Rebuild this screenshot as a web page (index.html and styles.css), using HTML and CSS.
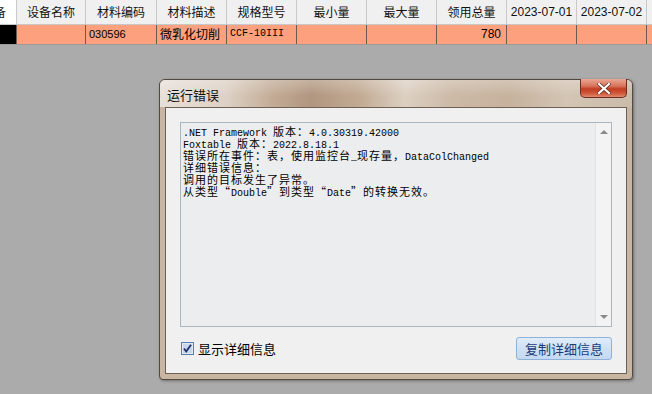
FILE: index.html
```html
<!DOCTYPE html>
<html lang="zh-CN">
<head>
    <meta charset="UTF-8">
    <title>运行错误</title>
    <link rel="stylesheet" href="styles.css">
</head>
<body>
    <div class="grid">
        <div class="hd first">备</div>
        <div class="hd">设备名称</div>
        <div class="hd">材料编码</div>
        <div class="hd">材料描述</div>
        <div class="hd">规格型号</div>
        <div class="hd">最小量</div>
        <div class="hd">最大量</div>
        <div class="hd">领用总量</div>
        <div class="hd date">2023-07-01</div>
        <div class="hd date">2023-07-02</div>
        <div class="hd"></div>

        <div class="cell black"></div>
        <div class="cell"></div>
        <div class="cell code">030596</div>
        <div class="cell">微乳化切削</div>
        <div class="cell spec">CCF-10III</div>
        <div class="cell"></div>
        <div class="cell"></div>
        <div class="cell num">780</div>
        <div class="cell"></div>
        <div class="cell"></div>
        <div class="cell"></div>
    </div>

    <div class="dialog">
        <div class="titlebar">
            <span class="title">运行错误</span>
            <button class="close">
                <svg width="14" height="11" viewBox="0 0 14 11">
                    <path d="M2 1 L12 10 M12 1 L2 10" stroke="#5a2a20" stroke-width="3.6" stroke-linecap="square"/>
                    <path d="M2 1 L12 10 M12 1 L2 10" stroke="#fff" stroke-width="2.2" stroke-linecap="square"/>
                </svg>
            </button>
        </div>
        <div class="client">
            <div class="textbox">
                <div class="text">
                    <div class="line">.NET Framework <span class="cj">版本：</span>4.0.30319.42000</div>
                    <div class="line">Foxtable <span class="cj">版本：</span>2022.8.18.1</div>
                    <div class="line"><span class="cj">错误所在事件：表，使用监控台</span>_<span class="cj">现存量，</span>DataColChanged</div>
                    <div class="line"><span class="cj">详细错误信息：</span></div>
                    <div class="line"><span class="cj">调用的目标发生了异常。</span></div>
                    <div class="line"><span class="cj">从类型“</span>Double<span class="cj">”到类型“</span>Date<span class="cj">”的转换无效。</span></div>
                </div>
                <div class="scrollbar">
                    <span class="arrow up"></span>
                    <span class="arrow down"></span>
                </div>
            </div>
            <div class="footer">
                <label class="check">
                    <svg width="13" height="13" viewBox="0 0 13 13">
                        <rect x="0.5" y="0.5" width="12" height="12" fill="#dfe9f5" stroke="#5c7fa8"/>
                        <rect x="2" y="2" width="9" height="9" fill="#c8d8ec"/>
                        <path d="M3 6.5 L5.2 9.5 L10 2.8" fill="none" stroke="#1b2f6b" stroke-width="1.8"/>
                    </svg>
                    显示详细信息
                </label>
                <button class="copy">复制详细信息</button>
            </div>
        </div>
    </div>
</body>
</html>
```

FILE: styles.css
```css
*{
    margin: 0;
    padding: 0;
    box-sizing: border-box;
}
body{
    width: 652px;
    height: 394px;
    overflow: hidden;
    background: #ababab;
    font-family: "Noto Sans CJK SC", "Liberation Sans", sans-serif;
    font-size: 12px;
    color: #000;
    position: relative;
}

/* table */
.grid{
    display: grid;
    grid-template-columns: 17px 69px 71px 70px 70px 70px 70px 70px 70px 70px 1fr;
    grid-template-rows: 25px 19px;
    border-bottom: 1px solid #9a9a9a;
}
.hd{
    background: #f0f0f0;
    border-right: 1px solid #c8c8c8;
    border-bottom: 1px solid #c8c8c8;
    text-align: center;
    font-size: 12px;
    line-height: 24px;
    color: #111;
    white-space: nowrap;
    overflow: hidden;
}
.hd.first{
    background: #fff;
    text-align: left;
    text-indent: -6px;
}
.hd.date{
    font-family: "Liberation Sans", sans-serif;
    font-size: 12px;
}
.cell{
    background: #fda07e;
    border-right: 1px solid #6e5a50;
    line-height: 18px;
    padding: 0 3px;
    white-space: nowrap;
    overflow: hidden;
    font-size: 12px;
}
.cell.black{
    background: #000;
}
.cell.code{
    font-family: "Liberation Sans", sans-serif;
    font-size: 11px;
}
.cell.spec{
    font-family: "Liberation Mono", monospace;
    font-size: 10px;
}
.cell.num{
    text-align: right;
    font-family: "Liberation Sans", sans-serif;
    padding-right: 5px;
}

/* dialog */
.dialog{
    position: absolute;
    left: 159px;
    top: 79px;
    width: 474px;
    height: 301px;
    border: 1px solid #54493f;
    border-radius: 6px 6px 4px 4px;
    background: #c8b6a3;
    padding: 0 5px 5px;
    box-shadow: 1px 1px 3px rgba(0,0,0,0.35);
    display: flex;
    flex-direction: column;
}
.titlebar{
    height: 28px;
    margin: 0 -5px;
    padding: 0 7px;
    border-radius: 5px 5px 0 0;
    background:
        linear-gradient(180deg, rgba(255,255,255,0.25), rgba(255,255,255,0) 60%),
        linear-gradient(90deg, #e7e0d9 0%, #ddd1c5 14%, #c2ab95 24%, #b19680 32%, #c1a992 42%, #dcd0c2 52%, #ccb9a6 62%, #c6b29d 74%, #d3c4b3 86%, #cbbba9 100%);
    display: flex;
    align-items: center;
    position: relative;
}
.title{
    font-size: 13px;
    color: #111;
    margin-top: 1px;
}
.close{
    position: absolute;
    right: 5px;
    top: -1px;
    width: 47px;
    height: 19px;
    border: 1px solid #6e2d22;
    border-top: 0;
    border-radius: 0 0 5px 5px;
    background: linear-gradient(180deg, #e9a895 0%, #d8715a 40%, #c13d22 55%, #d2593c 80%, #e08a6c 100%);
    display: flex;
    align-items: center;
    justify-content: center;
}
.client{
    flex: 1;
    background: #f0f0f0;
    border: 1px solid #6d6055;
    padding: 14px 14px 13px 14px;
    display: flex;
    flex-direction: column;
}
.textbox{
    height: 205px;
    background: #ecedee;
    border: 1px solid #aab7c0;
    display: flex;
}
.text{
    flex: 1;
    padding: 3px 2px;
    font-family: "Liberation Mono", monospace;
    font-size: 10px;
    white-space: nowrap;
}
.line{
    height: 12px;
    line-height: 12px;
}
.text .cj{
    font-family: "Noto Sans CJK SC", sans-serif;
    font-size: 11px;
    letter-spacing: 1px;
    line-height: 11px;
}
.scrollbar{
    width: 16px;
    background: #f3f3f3;
    border-left: 1px solid #e2e2e2;
    position: relative;
}
.arrow{
    position: absolute;
    left: 4px;
    width: 0;
    height: 0;
    border-left: 4px solid transparent;
    border-right: 4px solid transparent;
}
.arrow.up{
    top: 7px;
    border-bottom: 4px solid #8a8a8a;
}
.arrow.down{
    bottom: 7px;
    border-top: 4px solid #8a8a8a;
}
.footer{
    margin-top: 10px;
    display: flex;
    align-items: center;
    justify-content: space-between;
}
.check{
    display: flex;
    align-items: center;
    gap: 4px;
    font-size: 13px;
    padding-left: 1px;
}
.copy{
    width: 96px;
    height: 23px;
    border: 1px solid #8fb2d8;
    border-radius: 3px;
    background: linear-gradient(180deg, #e0ecf8 0%, #cfe1f4 50%, #c4d9f1 100%);
    color: #1c3b78;
    font-family: "Noto Sans CJK SC", sans-serif;
    font-size: 13px;
}
```
